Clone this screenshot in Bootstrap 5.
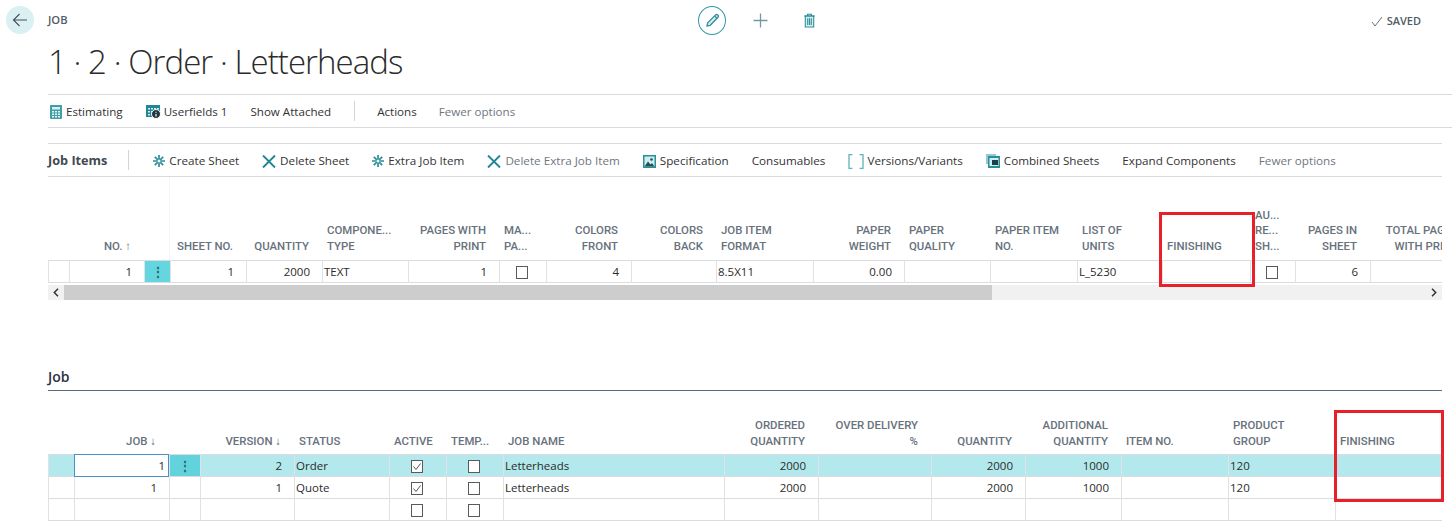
<!doctype html>
<html lang="en"><head><meta charset="utf-8"><title>Job</title>
<link href="https://cdn.jsdelivr.net/npm/bootstrap@5.3.0/dist/css/bootstrap.min.css" rel="stylesheet">
<style>
html,body{height:525px;overflow:hidden;background:#fff}
body{font-family:"Open Sans","Noto Sans",sans-serif;color:#212121;font-size:12px}
.pg-top{height:94px}
.top-row{height:34px;padding:6px 31px 0 6px}
.back-btn{width:28px;height:28px;border-radius:50%;background:#daf0f3;flex:none;margin-right:14px}
.crumb{font-size:11.2px;font-weight:600;color:#505c66;line-height:28px}
.page-title{font-size:33px;font-weight:300;color:#2b2b2b;line-height:44px;margin:6px 0 0 48px;letter-spacing:-.93px;white-space:nowrap}
.top-left{width:650px}
.ic-pen{width:28px;height:29px;border:1.3px solid #2f9aa5;border-radius:50%;margin-right:27px}
.ic-add{height:28px;margin-right:35px}
.ic-del{height:28px}
.saved{font-size:11px;font-weight:600;color:#505c66;margin-left:auto;height:30px}
.bar{margin-left:48px;border-top:1px solid #d9d9df;border-bottom:1px solid #d9d9df;height:34px;font-size:11.6px;color:#333;padding-top:2px}
.bar-a{margin-bottom:15px;padding-left:2px}
.bar-a .vsep{margin-right:22px}
.bar-b{margin-right:10px;font-size:11.68px}
.tool{display:inline-flex;align-items:center;gap:4px;white-space:nowrap;margin-right:23px}
.tool.narrow{gap:3px}
.tool.close-gap{margin-right:22px}
.muted-t{color:#6e7680}
.vsep{width:1px;height:20px;background:#d4d4d8;margin:-2px 24px 0 0}
.sect{font-weight:700;font-size:12.7px;color:#414a52;margin-right:21px;white-space:nowrap}
.tbl-wrap{overflow:hidden;margin:0 10px 0 48px}
table.gt{table-layout:fixed;border-collapse:separate;border-spacing:0;font-size:11.5px;color:#2b2b2b}
table.gt th{font-family:Roboto,sans-serif;font-size:11.4px;font-weight:500;color:#68717c;text-transform:uppercase;vertical-align:bottom;line-height:15.5px;padding:0 5px 6px 5px;white-space:nowrap;overflow:hidden;text-align:left}
table.gt td{padding:1px 3px 0 1px;border-bottom:1px solid #dcdce0;border-left:1px solid #e2e2e6;white-space:nowrap;overflow:hidden;line-height:20px}
table.gt th.r{text-align:right;padding-right:13px}
table.gt td.r{text-align:right;padding-right:12px}
table.gt tbody tr:first-child td{border-top:1px solid #dcdce0}
.grid-one{width:1423px}
.grid-one th{height:83px}
.grid-one th.rail{border-right:1px solid #f6f6f6}
.grid-one td{height:23px}
.grid-two{width:1394px}
table.grid-two th{height:63px;padding-bottom:5px}
.grid-two td{height:22px;border-bottom:2px solid #e4e4e8}
table.gt td.dots{background:#63d6df;text-align:center;color:#2d5f67;padding:0;font-weight:700;line-height:14px}
table.gt tr.sel-row td{background:#b3e9ec}
table.gt tr.sel-row td.dots{background:#62d3dd}
table.gt tr.sel-row td.focus-cell{background:#fff;border:1.5px solid #4a90c8;padding-right:3px}
.chk{display:block;width:12px;height:13px;margin:auto}
.scroll-x{height:15px;background:#f1f1f1;margin:2px 10px 0 48px}
.scroll-l,.scroll-r{width:16px;flex:none}
.scroll-t{width:928px;background:#cdcdcd}
.scroll-r{margin-left:auto}
.job-head{margin:66px 10px 0 48px;border-bottom:1px solid #5c6b7c;font-size:14px;font-weight:600;line-height:20px;height:25px;color:#2b333b;padding-top:1px}
.redbox{position:absolute;border:3px solid #e8202a;pointer-events:none}
.rb-a{left:1159px;top:212px;width:96px;height:75px}
.rb-b{left:1334px;top:410px;width:110px;height:92px}
</style></head>
<body class="position-relative">
<svg width="0" height="0" class="position-absolute"><defs>
<symbol id="star" viewBox="0 0 12 12"><path d="M6 0v12M0 6h12M1.800 1.800l8.400 8.400M10.200 1.800l-8.400 8.400" stroke="#2a8f9b" stroke-width="1.7" fill="none"/><circle cx="6" cy="6" r="1.5" fill="#fff"/></symbol>
<symbol id="cross" viewBox="0 0 14 13"><path d="M1 .5l12 12M13 .5l-12 12" stroke="#1f8794" stroke-width="1.9" fill="none"/></symbol>
<symbol id="chk-off" viewBox="0 0 12 13"><rect x=".5" y=".5" width="11" height="12" fill="#fff" stroke="#5a5a5a"/></symbol>
<symbol id="chk-on" viewBox="0 0 12 13"><rect x=".5" y=".5" width="11" height="12" fill="#fff" stroke="#5a5a5a"/><path d="M2.500 6.500l2.500 3 4.500-6" fill="none" stroke="#555" stroke-width="1"/></symbol>
</defs></svg>
<div class="pg-top">
 <div class="top-row d-flex align-items-start">
  <div class="back-btn d-flex align-items-center justify-content-center">
    <svg width="16" height="14" viewBox="0 0 16 14" fill="none" stroke="#45505a" stroke-width="1.1"><path d="M15 7H1.500M7.500 1 1.500 7l6 6"/></svg>
  </div>
  <div class="top-left"><span class="crumb">JOB</span></div>
  <div class="ic-pen d-flex align-items-center justify-content-center">
    <svg width="15" height="15" viewBox="0 0 15 15" fill="#d5eef0" stroke="#2f8f9a" stroke-width="1.3"><path d="M2 13l.7-3.200L10.600 1.900a1.400 1.400 0 0 1 2 0l.4.4a1.400 1.400 0 0 1 0 2L5.200 12.300z"/><path d="M9.600 3l2.400 2.400"/></svg>
  </div>
  <div class="ic-add d-flex align-items-center">
    <svg width="15" height="15" viewBox="0 0 15 15" stroke="#6f9aa0" stroke-width="1.3" fill="none"><path d="M7.500 .5v14M.5 7.500h14"/></svg>
  </div>
  <div class="ic-del d-flex align-items-center">
    <svg width="13" height="15" viewBox="0 0 13 15" fill="#d5eef0" stroke="#2f8f9a" stroke-width="1.1"><path d="M4.500 3V1.200h4V3"/><path d="M2.300 3v11h8.400V3z"/><path d="M1 3h11M4.700 5.200v6.800M6.500 5.200v6.800M8.300 5.200v6.800"/></svg>
  </div>
  <div class="saved d-flex align-items-center gap-1">
    <svg width="12" height="11" viewBox="0 0 12 11" fill="none" stroke="#6b747c" stroke-width="1"><path d="M1 6l3 4 7-9"/></svg><span>SAVED</span>
  </div>
 </div>
 <h1 class="page-title">1 · 2 · Order · Letterheads</h1>
</div>

<div class="bar bar-a d-flex align-items-center">
  <span class="tool"><svg width="12" height="14" viewBox="0 0 12 14"><rect width="12" height="14" rx="1" fill="#3f9fa9"/><rect x="2" y="2" width="8" height="2.500" fill="#d9f0f2"/><path d="M2 6h2v1.500H2zM5 6h2v1.500H5zM8 6h2v1.500H8zM2 8.500h2V10H2zM5 8.500h2V10H5zM8 8.500h2V10H8zM2 11h2v1.500H2zM5 11h2v1.500H5zM8 11h2v1.500H8z" fill="#e6f6f7"/></svg>Estimating</span>
  <span class="tool narrow"><svg width="15" height="14" viewBox="0 0 15 14"><rect width="14" height="12" fill="#1f8794"/><path d="M2 3h2v1.500H2zM5 3h2v1.500H5zM8 3h2v1.500H8zM11 3h2v1.500h-2zM2 6h2v1.500H2zM5 6h2v1.500H5zM2 9h2v1.500H2z" fill="#d5eef0"/><circle cx="10" cy="9" r="4.500" fill="#26343c" stroke="#fff"/><path d="M10 6.800v1M10 9v2.400" stroke="#fff" stroke-width="1.200"/></svg>Userfields 1</span>
  <span class="tool">Show Attached</span>
  <span class="vsep"></span>
  <span class="tool close-gap">Actions</span>
  <span class="tool muted-t">Fewer options</span>
</div>

<div class="bar bar-b d-flex align-items-center">
  <span class="sect">Job Items</span>
  <span class="vsep"></span>
  <span class="tool"><svg width="12" height="12"><use href="#star"/></svg>Create Sheet</span>
  <span class="tool"><svg width="14" height="13"><use href="#cross"/></svg>Delete Sheet</span>
  <span class="tool"><svg width="12" height="12"><use href="#star"/></svg>Extra Job Item</span>
  <span class="tool muted-t"><svg width="14" height="13"><use href="#cross"/></svg>Delete Extra Job Item</span>
  <span class="tool"><svg width="13" height="13" viewBox="0 0 13 13"><rect width="13" height="13" fill="#2a8f9b"/><rect x="1.500" y="1.500" width="10" height="10" fill="#cfeef0"/><path d="M1.500 11.500l3.500-5 2.500 3 1.500-1.500 2.500 3.500z" fill="#20505a"/><circle cx="8.500" cy="4.500" r="1.300" fill="#20505a"/></svg>Specification</span>
  <span class="tool">Consumables</span>
  <span class="tool narrow"><svg width="16" height="15" viewBox="0 0 16 15" fill="none" stroke="#5fb3bb" stroke-width="1.300"><path d="M4.500 .7H1v13.600h3.500M11.500 .7H15v13.600h-3.500"/></svg>Versions/Variants</span>
  <span class="tool"><svg width="14" height="14" viewBox="0 0 14 14"><rect width="10" height="10" fill="#8ccdd3"/><rect x="2" y="2" width="12" height="12" fill="#2a8f9b"/><rect x="3.500" y="4" width="9" height="8" fill="#cfeef0"/><rect x="6" y="6" width="6" height="5" fill="#1d3f47"/></svg>Combined Sheets</span>
  <span class="tool">Expand Components</span>
  <span class="tool muted-t">Fewer options</span>
</div>

<div class="tbl-wrap">
<table class="gt grid-one">
<colgroup><col width="21"><col width="75"><col width="26"><col width="76"><col width="76"><col width="86"><col width="91"><col width="47"><col width="85"><col width="85"><col width="97"><col width="91"><col width="86"><col width="87"><col width="85"><col width="88"><col width="45"><col width="75"><col width="101"></colgroup>
<thead><tr>
<th></th><th class="r">No. ↑</th><th class="rail"></th><th class="r">Sheet No.</th><th class="r">Quantity</th><th>Compone...<br>Type</th><th class="r">Pages with<br>Print</th><th>Ma...<br>Pa...</th><th class="r">Colors<br>Front</th><th class="r">Colors<br>Back</th><th>Job Item<br>Format</th><th class="r">Paper<br>Weight</th><th>Paper<br>Quality</th><th>Paper Item<br>No.</th><th>List of<br>Units</th><th>Finishing</th><th>Au...<br>Re...<br>Sh...</th><th class="r">Pages in<br>Sheet</th><th class="r">Total Pages<br>with Print</th>
</tr></thead>
<tbody><tr>
<td></td><td class="r">1</td><td class="dots">⋮</td><td class="r">1</td><td class="r">2000</td><td>TEXT</td><td class="r">1</td><td><svg class="chk"><use href="#chk-off"/></svg></td><td class="r">4</td><td></td><td>8.5X11</td><td class="r">0.00</td><td></td><td></td><td>L_5230</td><td></td><td><svg class="chk"><use href="#chk-off"/></svg></td><td class="r">6</td><td></td>
</tr></tbody>
</table>
</div>
<div class="scroll-x d-flex">
  <span class="scroll-l d-flex align-items-center justify-content-center"><svg width="6" height="9" viewBox="0 0 6 9" fill="none" stroke="#333" stroke-width="1.500"><path d="M5 .8 1.300 4.500 5 8.200"/></svg></span><span class="scroll-t"></span><span class="scroll-r d-flex align-items-center justify-content-center"><svg width="6" height="9" viewBox="0 0 6 9" fill="none" stroke="#333" stroke-width="1.500"><path d="M1 .8l3.700 3.700L1 8.200"/></svg></span>
</div>

<div class="job-head">Job</div>
<div class="tbl-wrap">
<table class="gt grid-two">
<colgroup><col width="26"><col width="95"><col width="31"><col width="94"><col width="95"><col width="57"><col width="57"><col width="221"><col width="94"><col width="113"><col width="94"><col width="96"><col width="107"><col width="107"><col width="107"></colgroup>
<thead><tr>
<th></th><th class="r">Job ↓</th><th></th><th class="r">Version ↓</th><th>Status</th><th>Active</th><th>Temp...</th><th>Job Name</th><th class="r">Ordered<br>Quantity</th><th class="r">Over Delivery<br>%</th><th class="r">Quantity</th><th class="r">Additional<br>Quantity</th><th>Item No.</th><th>Product<br>Group</th><th>Finishing</th>
</tr></thead>
<tbody>
<tr class="sel-row"><td></td><td class="r focus-cell">1</td><td class="dots">⋮</td><td class="r">2</td><td>Order</td><td><svg class="chk"><use href="#chk-on"/></svg></td><td><svg class="chk"><use href="#chk-off"/></svg></td><td>Letterheads</td><td class="r">2000</td><td></td><td class="r">2000</td><td class="r">1000</td><td></td><td>120</td><td></td></tr>
<tr><td></td><td class="r">1</td><td></td><td class="r">1</td><td>Quote</td><td><svg class="chk"><use href="#chk-on"/></svg></td><td><svg class="chk"><use href="#chk-off"/></svg></td><td>Letterheads</td><td class="r">2000</td><td></td><td class="r">2000</td><td class="r">1000</td><td></td><td>120</td><td></td></tr>
<tr><td></td><td></td><td></td><td></td><td></td><td><svg class="chk"><use href="#chk-off"/></svg></td><td><svg class="chk"><use href="#chk-off"/></svg></td><td></td><td></td><td></td><td></td><td></td><td></td><td></td><td></td></tr>
</tbody>
</table>
</div>
<div class="redbox rb-a"></div>
<div class="redbox rb-b"></div>
</body></html>
